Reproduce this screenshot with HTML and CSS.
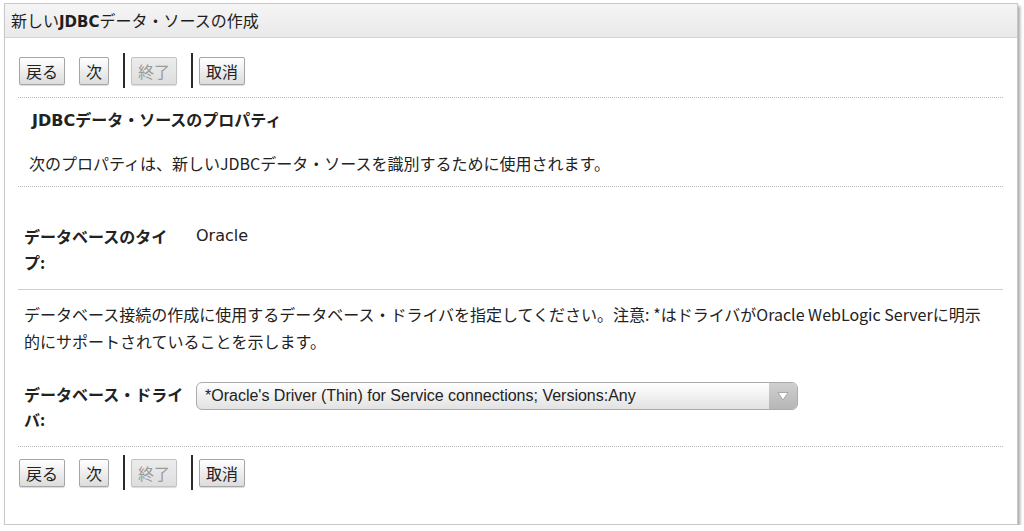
FILE: index.html
```html
<!DOCTYPE html>
<html lang="ja">
<head>
    <meta charset="UTF-8">
    <meta name="viewport" content="width=device-width, initial-scale=1.0">
    <title>新しいJDBCデータ・ソースの作成</title>
    <link rel="stylesheet" href="styles.css">
</head>
<body>
    <div class="panel">
        <div class="panel-head">新しい<span class="latin">JDBC</span>データ・ソースの作成</div>

        <div class="panel-body">
            <div class="toolbar">
                <button type="button" class="btn">戻る</button>
                <button type="button" class="btn">次</button>
                <span class="sep"></span>
                <button type="button" class="btn" disabled>終了</button>
                <span class="sep"></span>
                <button type="button" class="btn">取消</button>
            </div>

            <div class="intro">
                <h3><span class="latin">JDBC</span>データ・ソースのプロパティ</h3>
                <p>次のプロパティは、新しいJDBCデータ・ソースを識別するために使用されます。</p>
            </div>

            <div class="field type-row">
                <div class="field-label">データベースのタイプ:</div>
                <div class="field-value latin">Oracle</div>
            </div>

            <div class="driver">
                <p class="note">データベース接続の作成に使用するデータベース・ドライバを指定してください。注意: *はドライバがOracle WebLogic Serverに明示的にサポートされていることを示します。</p>

                <div class="field">
                    <div class="field-label">データベース・ドライバ:</div>
                    <div class="field-value">
                        <div class="select">
                            <span class="select-text">*Oracle's Driver (Thin) for Service connections; Versions:Any</span>
                            <span class="select-arrow">
                                <svg width="12" height="10" viewBox="0 0 12 10">
                                    <path d="M1 1.5 H11 L6 9 Z" fill="#fff" stroke="#9a9a9a" stroke-width="0.8"/>
                                </svg>
                            </span>
                        </div>
                    </div>
                </div>
            </div>

            <div class="toolbar bottom">
                <button type="button" class="btn">戻る</button>
                <button type="button" class="btn">次</button>
                <span class="sep"></span>
                <button type="button" class="btn" disabled>終了</button>
                <span class="sep"></span>
                <button type="button" class="btn">取消</button>
            </div>
        </div>
    </div>
</body>
</html>
```

FILE: styles.css
```css
body {
    margin: 0;
    background: #fff;
    color: #222;
    font-family: "Noto Sans CJK JP", sans-serif;
    font-size: 16px;
}

.latin {
    font-family: "DejaVu Sans", "Noto Sans CJK JP", sans-serif;
}

.panel {
    margin: 3px 6px 0 4px;
    border: 1px solid #c8c8c8;
    box-shadow: 2px 3px 3px rgba(0, 0, 0, 0.35);
    background: #fff;
}

.panel-head {
    height: 33px;
    line-height: 33px;
    padding-left: 6px;
    font-size: 16px;
    color: #1e1e1e;
    background: linear-gradient(#f5f5f5, #e9e9e9);
    border-bottom: 1px solid #d4d4d4;
}

.panel-head .latin {
    font-size: 15px;
    font-weight: bold;
}

.intro h3 .latin {
    font-weight: bold;
}

.panel-body {
    padding: 0 14px 0 13px;
}

.toolbar {
    display: flex;
    align-items: center;
    padding: 15px 0 9px 1px;
    border-bottom: 1px dotted #b8b8b8;
}

.toolbar.bottom {
    border-bottom: none;
    padding: 8px 0 34px 1px;
}

.btn {
    height: 28px;
    padding: 0 6px;
    margin-right: 14px;
    font-family: "Noto Sans CJK JP", sans-serif;
    font-size: 16px;
    color: #222;
    background: linear-gradient(#ffffff, #dcdcdc);
    border: 1px solid #a6a6a6;
    border-radius: 2px;
    box-shadow: 0 1px 1px rgba(0, 0, 0, 0.15);
}

.btn:disabled {
    color: #9a9a9a;
    background: linear-gradient(#ececec, #dedede);
    border-color: #c2c2c2;
}

.sep {
    width: 2px;
    height: 35px;
    background: #2a2a2a;
    margin: 0 6px 0 0;
}

.intro {
    padding: 9px 0 11px 14px;
    border-bottom: 1px dotted #b8b8b8;
}

.intro h3 {
    margin: 0;
    font-size: 16px;
    line-height: 24px;
    font-weight: bold;
}

.intro p {
    margin: 18px 0 0 -3px;
    line-height: 24px;
}

.field {
    display: grid;
    grid-template-columns: 172px 1fr;
}

.field-label {
    width: 162px;
    font-weight: bold;
    line-height: 26px;
}

.field-value {
    line-height: 26px;
}

.type-row {
    padding: 36px 0 14px 6px;
    border-bottom: 1px solid #cfcfcf;
}

.driver {
    padding: 11px 0 14px 6px;
    border-bottom: 1px dotted #b8b8b8;
}

.note {
    margin: 0 14px 0 0;
    line-height: 27px;
}

.driver .field {
    margin-top: 27px;
}

.driver .field-label {
    line-height: 25px;
}

.select {
    display: flex;
    width: 600px;
    height: 26px;
    border: 1px solid #ababab;
    border-radius: 6px;
    background: linear-gradient(#ffffff, #e2e2e2);
    overflow: hidden;
}

.select-text {
    flex: 1;
    padding-left: 8px;
    font-family: "Liberation Sans", sans-serif;
    font-size: 16px;
    line-height: 26px;
    color: #222;
}

.select-arrow {
    width: 28px;
    display: flex;
    align-items: center;
    justify-content: center;
    background: linear-gradient(#cfcfcf, #b6b6b6);
}
```
